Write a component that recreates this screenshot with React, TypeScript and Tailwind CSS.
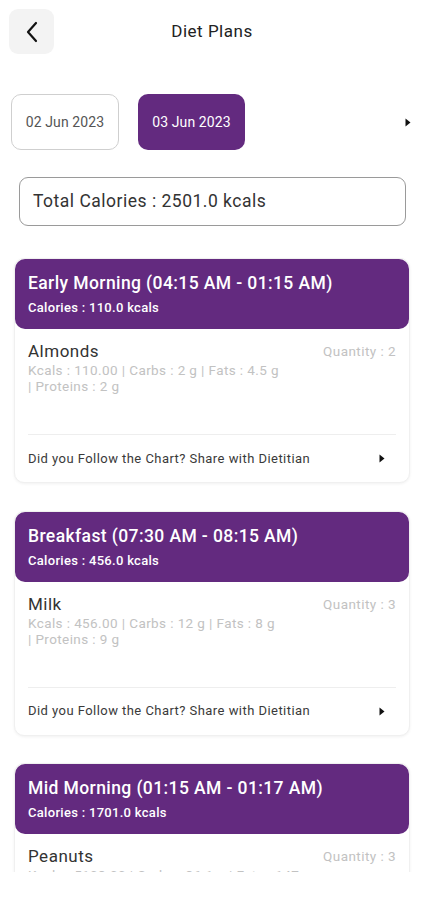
import React from 'react';

type Meal = {
  title: string;
  calories: string;
  food: string;
  quantity: number;
  macros: string;
  proteins: string;
};

const meals: Meal[] = [
  {
    title: 'Early Morning (04:15 AM - 01:15 AM)',
    calories: '110.0',
    food: 'Almonds',
    quantity: 2,
    macros: 'Kcals : 110.00 | Carbs : 2 g | Fats : 4.5 g',
    proteins: '| Proteins : 2 g',
  },
  {
    title: 'Breakfast (07:30 AM - 08:15 AM)',
    calories: '456.0',
    food: 'Milk',
    quantity: 3,
    macros: 'Kcals : 456.00 | Carbs : 12 g | Fats : 8 g',
    proteins: '| Proteins : 9 g',
  },
  {
    title: 'Mid Morning (01:15 AM - 01:17 AM)',
    calories: '1701.0',
    food: 'Peanuts',
    quantity: 3,
    macros: 'Kcals : 5103.00 | Carbs : 36.1 g | Fats : 147 g',
    proteins: '| Proteins : 77 g',
  },
];

function Caret() {
  return (
    <svg width="6" height="9" viewBox="0 0 6 9" className="block">
      <path d="M0.5 0.5 L5.5 4.5 L0.5 8.5 Z" fill="#111" />
    </svg>
  );
}

function MealCard({ meal }: { meal: Meal }) {
  return (
    <div className="rounded-[10px] border border-[#f0f0f0] bg-white shadow-[0_1px_3px_rgba(0,0,0,0.06)]">
      <div className="h-[70px] rounded-[10px] bg-[#632a7f] px-[13px] pt-[12px] text-white">
        <div className="text-[17.5px] font-medium leading-[24px] tracking-[0.4px]">{meal.title}</div>
        <div className="mt-[5px] text-[13px] font-medium leading-[16px] tracking-[0.3px]">Calories : {meal.calories} kcals</div>
      </div>
      <div className="mx-[13px] h-[106px] border-b border-[#eeeeee] pt-[11px]">
        <div className="flex items-start justify-between">
          <div>
            <div className="text-[17px] leading-[22px] tracking-[0.5px] text-[#333]">{meal.food}</div>
            <div className="text-[13.5px] leading-[16px] tracking-[0.4px] text-[#c2c2c2]">{meal.macros}</div>
            <div className="text-[13.5px] leading-[16px] tracking-[0.4px] text-[#c2c2c2]">{meal.proteins}</div>
          </div>
          <div className="pt-[3px] text-[13.5px] leading-[16px] tracking-[0.45px] text-[#c2c2c2]">Quantity : {meal.quantity}</div>
        </div>
      </div>
      <div className="mx-[13px] flex h-[47px] items-center justify-between pr-[11px]">
        <span className="text-[13px] tracking-[0.45px] text-[#3a3a3a]">Did you Follow the Chart? Share with Dietitian</span>
        <Caret />
      </div>
    </div>
  );
}

export default function App() {
  return (
    <div className="h-[900px] w-[424px] bg-white font-['Roboto',sans-serif]">
      <div className="h-[872px] overflow-hidden">
        <div className="relative flex h-[54px] items-end px-[9px]">
          <button className="flex h-[45px] w-[45px] items-center justify-center rounded-[9px] bg-[#f3f3f3]">
            <svg width="14" height="22" viewBox="0 0 14 22">
              <path d="M11 2 L3 11 L11 20" fill="none" stroke="#111" strokeWidth="2.2" strokeLinecap="round" strokeLinejoin="round" />
            </svg>
          </button>
          <div className="absolute left-0 right-0 top-[21px] text-center text-[17px] leading-[20px] tracking-[0.5px] text-[#222]">Diet Plans</div>
        </div>

        <div className="mt-[40px] flex items-center pl-[11px] pr-[13px]">
          <div className="flex h-[56px] w-[108px] items-center justify-center rounded-[10px] border border-[#cfcfcf] text-[14px] tracking-[0.1px] text-[#555]">
            02 Jun 2023
          </div>
          <div className="ml-[19px] flex h-[56px] w-[107px] items-center justify-center rounded-[10px] bg-[#632a7f] text-[14px] tracking-[0.1px] text-white">
            03 Jun 2023
          </div>
          <div className="ml-auto">
            <Caret />
          </div>
        </div>

        <div className="ml-[19px] mr-[18px] mt-[27px] flex h-[49px] items-center rounded-[9px] border border-[#9a9a9a] px-[13px] text-[17.5px] tracking-[0.5px] text-[#333]">
          Total Calories : 2501.0 kcals
        </div>

        <div className="mt-[32px] flex flex-col gap-[27.5px] px-[14px]">
          {meals.map((m) => (
            <MealCard key={m.title} meal={m} />
          ))}
        </div>
      </div>
    </div>
  );
}
